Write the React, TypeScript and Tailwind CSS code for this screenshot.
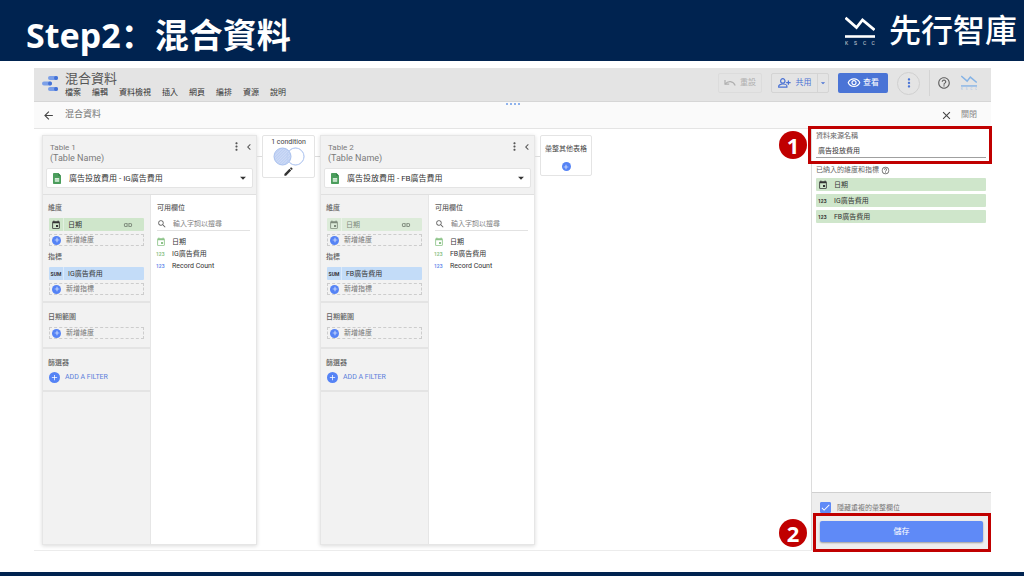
import { useState } from 'react'
import type { ReactNode } from 'react'
import {
  MdAdd,
  MdArrowBack,
  MdArrowDropDown,
  MdCheck,
  MdChevronLeft,
  MdClose,
  MdEdit,
  MdEvent,
  MdHelpOutline,
  MdLink,
  MdMoreVert,
  MdOutlineVisibility,
  MdSearch
} from 'react-icons/md'

interface BlendTable {
  id: number
  source: string
  metric: string
  dimmed?: boolean
}

const MENU = ['檔案', '編輯', '資料檢視', '插入', '網頁', '編排', '資源', '說明']

const TABLES: BlendTable[] = [
  { id: 1, source: '廣告投放費用 - IG廣告費用', metric: 'IG廣告費用' },
  { id: 2, source: '廣告投放費用 - FB廣告費用', metric: 'FB廣告費用', dimmed: true }
]

function WaveMark({ className }: { className: string }) {
  return (
    <svg viewBox="0 0 30 30" className={className} fill="none" stroke="currentColor" aria-hidden="true">
      <path d="M0.500 1.800 L11.500 11.500 L17.500 4 L29.500 14" strokeWidth="2.8" />
      <path d="M0 20.500 H30" strokeWidth="2.6" />
      <g fill="currentColor" stroke="none" fontSize="5" opacity="0.8">
        <text x="0" y="29">K</text>
        <text x="9" y="29">S</text>
        <text x="18" y="29">C</text>
        <text x="26.500" y="29">C</text>
      </g>
    </svg>
  )
}

function StudioLogo() {
  return (
    <svg viewBox="0 0 16 15" className="h-[15px] w-4" aria-hidden="true">
      <rect x="6" y="0" width="10" height="4" rx="2" fill="#7b9fe8" />
      <circle cx="14" cy="2" r="2" fill="#4472d6" />
      <rect x="0" y="5.500" width="10" height="4" rx="2" fill="#7b9fe8" />
      <circle cx="8" cy="7.500" r="2" fill="#4472d6" />
      <rect x="6" y="11" width="10" height="4" rx="2" fill="#7b9fe8" />
      <circle cx="14" cy="13" r="2" fill="#4472d6" />
    </svg>
  )
}

function UndoIcon() {
  return (
    <svg viewBox="0 0 12 8" className="h-2 w-3" fill="none" stroke="currentColor" strokeWidth="1.2" aria-hidden="true">
      <path d="M1 1 V5.200 H5.200" />
      <path d="M1.200 5 C4 1.600 9 1.600 11.200 6.500" />
    </svg>
  )
}

function ShareIcon() {
  return (
    <svg viewBox="0 0 13 10" className="h-[10px] w-[13px]" fill="none" stroke="currentColor" strokeWidth="1.2" aria-hidden="true">
      <circle cx="4.800" cy="2.900" r="2.200" />
      <path d="M0.700 9.200 V8 C0.700 6.900 3 6 4.800 6 C6.600 6 8.900 6.900 8.900 8 V9.200 Z" />
      <path d="M10.400 2.400 V6.800 M8.200 4.600 H12.600" />
    </svg>
  )
}

function SheetIcon() {
  return (
    <svg viewBox="0 0 8 11" className="h-[11px] w-2" aria-hidden="true">
      <path d="M0.800 0 H5.300 L8 2.700 V10.200 Q8 11 7.200 11 H0.800 Q0 11 0 10.200 V0.800 Q0 0 0.800 0Z" fill="#4b9d5c" />
      <path d="M5.300 0 V2.700 H8Z" fill="#2f7d43" />
      <rect x="1.800" y="5" width="4.400" height="3.800" fill="#d3ead6" />
      <path d="M1.800 6.900 H6.200" stroke="#8cc597" strokeWidth="0.500" />
    </svg>
  )
}

function JoinIcon() {
  return (
    <svg viewBox="0 0 32 19" className="h-[19px] w-8" aria-hidden="true">
      <defs>
        <pattern id="hatch" width="2" height="2" patternUnits="userSpaceOnUse" patternTransform="rotate(45)">
          <rect width="2" height="2" fill="#cfdcf7" />
          <path d="M0 0 V2" stroke="#a9c1ee" strokeWidth="1" />
        </pattern>
      </defs>
      <circle cx="22.500" cy="9.500" r="8.500" fill="#fff" stroke="#bed0f3" />
      <circle cx="9.500" cy="9.500" r="8.500" fill="url(#hatch)" stroke="#a9c1ee" />
      <circle cx="22.500" cy="9.500" r="8.500" fill="none" stroke="#bed0f3" />
    </svg>
  )
}

function Plus({ big }: { big?: boolean }) {
  return (
    <span
      className={
        big
          ? 'flex size-[11px] shrink-0 items-center justify-center rounded-full bg-[#5583f5] text-[9px] text-white'
          : 'flex size-[9px] shrink-0 items-center justify-center rounded-full bg-[#5583f5] text-[8px] text-white'
      }
    >
      <MdAdd />
    </span>
  )
}

function AddField({ children }: { children: ReactNode }) {
  return (
    <button className="flex h-3 w-full items-center gap-[5px] border border-dashed border-[#cdcdcd] px-0.5 text-[#757575]">
      <Plus />
      {children}
    </button>
  )
}

function DateChip({ dimmed }: { dimmed?: boolean }) {
  return (
    <div
      className={
        dimmed
          ? 'flex h-[13px] items-center rounded-[1px] bg-[#dcebd9] text-[#7d8a7b]'
          : 'flex h-[13px] items-center rounded-[1px] bg-[#cfe6cb] text-[#333]'
      }
    >
      <span className="flex h-full w-[15px] items-center justify-center border-r border-white/40 text-[10px]">
        <MdEvent />
      </span>
      <span className="flex-1 pl-1">日期</span>
      <MdLink className="mr-[11px] text-[10px] text-[#6f7a6d]" />
    </div>
  )
}

function TablePanel({ table }: { table: BlendTable }) {
  return (
    <section className="flex w-[215px] shrink-0 flex-col border border-[#e6e6e6] bg-[#f2f2f2] shadow-[0_1px_4px_rgba(0,0,0,0.15)]">
      <header className="h-[59px] border-b border-[#e0e0e0] px-[3px] pt-1">
        <div className="flex h-7 items-start justify-between pl-1 text-[#7a7a7a]">
          <div className="pt-[3px]">
            <h2 className="text-[8px] leading-[10px]">Table {table.id}</h2>
            <p className="text-[9px] leading-[11px]">(Table Name)</p>
          </div>
          <div className="-mr-0.5 flex text-[#555]">
            <button aria-label="更多選項"><MdMoreVert className="text-[13px]" /></button>
            <button aria-label="收合"><MdChevronLeft className="text-[12px]" /></button>
          </div>
        </div>
        <div className="relative flex h-5 items-center rounded-[2px] border border-[#e4e4e4] bg-white pl-[6px]">
          <SheetIcon />
          <select
            aria-label="資料來源"
            className="h-full flex-1 appearance-none bg-transparent pt-px pl-2 text-[8px] text-[#333] outline-none"
          >
            <option>{table.source}</option>
          </select>
          <MdArrowDropDown className="pointer-events-none absolute right-0.5 text-[14px] text-[#333]" />
        </div>
      </header>
      <div className="flex flex-1 text-[7px] leading-[10px]">
        <div className="w-[108px] border-r border-[#e6e6e6] text-[#616161]">
          <div className="border-b-2 border-[#e4e4e4] px-[5px] pt-2 pb-[6px]">
            <h3 className="font-medium">維度</h3>
            <div className="mt-[5px] flex flex-col gap-[3px] px-px">
              <DateChip dimmed={table.dimmed} />
              <AddField>新增維度</AddField>
            </div>
            <h3 className="mt-[6px] font-medium">指標</h3>
            <div className="mt-[5px] flex flex-col gap-[3px] px-px">
              <div className="flex h-[13px] items-center rounded-[1px] bg-[#c3dcf8] text-[#333]">
                <span className="flex h-full w-[15px] items-center justify-center border-r border-white/40 text-[5px] font-bold">
                  SUM
                </span>
                <span className="pl-1">{table.metric}</span>
              </div>
              <AddField>新增指標</AddField>
            </div>
          </div>
          <div className="border-b-2 border-[#e4e4e4] px-[5px] pt-[9px] pb-2">
            <h3 className="font-medium">日期範圍</h3>
            <div className="mt-[5px] px-px">
              <AddField>新增維度</AddField>
            </div>
          </div>
          <div className="border-b-2 border-[#e4e4e4] px-[5px] pt-[9px] pb-[7px]">
            <h3 className="font-medium">篩選器</h3>
            <button className="mt-[3px] ml-px flex h-3 items-center gap-[5px] text-[#5c7fdb]">
              <Plus big />
              ADD A FILTER
            </button>
          </div>
        </div>
        <div className="flex-1 bg-white px-[6px] pt-2 text-[#333]">
          <h3 className="font-medium text-[#616161]">可用欄位</h3>
          <label className="mt-[5px] flex h-[13px] items-center gap-[6px] border-b border-[#e2e2e2]">
            <MdSearch className="shrink-0 text-[10px] text-[#616161]" />
            <input
              aria-label="搜尋欄位"
              placeholder="輸入字詞以搜尋"
              className="w-full min-w-0 outline-none placeholder:text-[#858585]"
            />
          </label>
          <ul className="mt-1">
            <li className="flex h-[13px] items-center">
              <MdEvent className="-ml-px mr-[6px] text-[10px] text-[#8dc389]" />
              日期
            </li>
            <li className="flex h-3 items-center">
              <span className="-ml-px w-4 text-[5px] font-bold text-[#8dc389]">123</span>
              {table.metric}
            </li>
            <li className="flex h-3 items-center">
              <span className="-ml-px w-4 text-[5px] font-bold text-[#6e8fec]">123</span>
              Record Count
            </li>
          </ul>
        </div>
      </div>
    </section>
  )
}

function Connector() {
  return <span className="mt-[21px] h-px w-[5px] shrink-0 bg-[#dcdcdc]" />
}

function Badge({ children }: { children: ReactNode }) {
  return (
    <span className="flex size-7 items-center justify-center rounded-full bg-[#c00000] font-['Noto_Sans','Open_Sans',sans-serif] text-[22px] leading-none font-bold text-white">
      {children}
    </span>
  )
}

export default function App() {
  const [name, setName] = useState('廣告投放費用')
  const [hideJoined, setHideJoined] = useState(true)

  return (
    <div className="flex min-h-screen flex-col bg-white font-[Roboto,'Noto_Sans_CJK_TC',sans-serif]">
      <header className="flex h-[61px] items-center justify-between bg-[#002350] pr-[7px] pl-[26px] text-white">
        <h1 lang="zh-Hans" className="pt-2 font-['Noto_Sans','Noto_Sans_CJK_SC',sans-serif] text-[34px] leading-none font-bold">
          Step2：混合資料
        </h1>
        <div className="flex items-center gap-[14px]">
          <WaveMark className="size-[30px]" />
          <span className="text-[32px] leading-none font-medium">先行智庫</span>
        </div>
      </header>

      <main className="mt-[7px] mr-[33px] mb-[21px] ml-[34px] flex flex-1 flex-col border-b border-[#ececec]">
        <div className="flex h-[34px] items-center border-b border-[#d6d6d6] bg-[#e4e4e4] pb-[3px] pl-2">
          <StudioLogo />
          <div className="ml-[7px] flex-1 pt-1">
            <h2 className="text-[13px] leading-[16px] text-[#555]">混合資料</h2>
            <nav className="flex gap-[11px] text-[8px] leading-[12px] text-[#333]">
              {MENU.map((item) => (
                <button key={item}>{item}</button>
              ))}
            </nav>
          </div>
          <div className="flex items-center text-[8px]">
            <button className="flex h-5 w-11 items-center justify-center gap-1 rounded-[2px] border border-[#dcdcdc] text-[#b0b0b0]">
              <UndoIcon />
              重設
            </button>
            <div className="ml-[9px] flex h-5 rounded-[2px] border border-[#d4d4d4] text-[#4a72d4]">
              <button className="flex w-[46px] items-center justify-center gap-[5px] border-r border-[#d4d4d4]">
                <ShareIcon />
                共用
              </button>
              <button aria-label="共用選項" className="flex w-[10px] items-center justify-center">
                <MdArrowDropDown className="text-[10px]" />
              </button>
            </div>
            <button className="ml-[9px] flex h-5 w-[50px] items-center justify-center gap-0.5 rounded-[2px] bg-[#4a74d6] text-white">
              <MdOutlineVisibility className="text-[14px]" />
              查看
            </button>
            <button
              aria-label="更多"
              className="ml-[9px] flex size-[23px] items-center justify-center rounded-full border border-[#d0d0d0] text-[#4a74d6]"
            >
              <MdMoreVert className="text-[14px]" />
            </button>
            <span className="ml-[9px] h-[26px] w-px bg-[#d4d4d4]" />
            <button aria-label="說明" className="ml-[7px] text-[#616161]">
              <MdHelpOutline className="text-[14px]" />
            </button>
            <WaveMark className="mr-[14px] ml-[10px] size-4 text-[#85b3e6]" />
          </div>
        </div>

        <div className="grid h-[27px] grid-cols-3 items-center border-b border-[#e4e4e4] bg-[#fafafa]">
          <div className="flex items-center gap-[10px] pl-2 text-[9px] text-[#777]">
            <button aria-label="返回">
              <MdArrowBack className="text-[13px] text-[#444]" />
            </button>
            混合資料
          </div>
          <div className="flex justify-center gap-0.5 self-start pt-px">
            {[0, 1, 2, 3].map((dot) => (
              <span key={dot} className="size-0.5 rounded-full bg-[#6b9be8]" />
            ))}
          </div>
          <button className="mr-[14px] flex items-center gap-2 justify-self-end text-[8px] text-[#888]">
            <MdClose className="text-[13px] text-[#444]" />
            關閉
          </button>
        </div>

        <div className="flex flex-1">
          <div className="flex min-w-0 flex-1 items-start px-2 pt-[6px] pb-[5px]">
            <div className="flex self-stretch">
              <TablePanel table={TABLES[0]} />
              <Connector />
            </div>
            <div className="flex h-[43px] w-[53px] shrink-0 flex-col items-center rounded-[2px] border border-[#e4e4e4] bg-white pt-0.5 text-[7px] leading-[9px] text-[#424242]">
              1 condition
              <JoinIcon />
              <button aria-label="編輯條件">
                <MdEdit className="text-[11px] text-[#333]" />
              </button>
            </div>
            <Connector />
            <div className="flex self-stretch">
              <TablePanel table={TABLES[1]} />
              <Connector />
            </div>
            <button className="flex h-[41px] w-[52px] shrink-0 flex-col items-center justify-center gap-2 rounded-[2px] border border-[#e4e4e4] bg-white pt-1 text-[7px] leading-[10px] text-[#424242]">
              彙整其他表格
              <Plus />
            </button>
          </div>

          <aside className="relative flex w-[180px] shrink-0 flex-col border-l border-[#dcdcdc] text-[7px] leading-[10px] text-[#333]">
            <div className="flex flex-1 flex-col pt-0.5 pr-[5px] pl-1">
              <label htmlFor="source-name" className="text-[#616161]">資料來源名稱</label>
              <input
                id="source-name"
                value={name}
                onChange={(e) => setName(e.target.value)}
                className="mt-px h-4 border-b border-[#a0a0a0] px-0.5 outline-none"
              />
              <h3 className="mt-[7px] flex items-center gap-0.5 text-[#616161]">
                已納入的維度和指標
                <MdHelpOutline className="text-[9px]" />
              </h3>
              <ul className="mt-[3px] flex flex-col gap-[3px]">
                <li className="flex h-[13px] items-center rounded-[1px] bg-[#cfe6cb] pl-0.5">
                  <MdEvent className="mr-[6px] text-[10px]" />
                  日期
                </li>
                {TABLES.map((t) => (
                  <li key={t.id} className="flex h-[13px] items-center rounded-[1px] bg-[#cfe6cb] pl-0.5">
                    <span className="w-4 text-[5px] font-bold">123</span>
                    {t.metric}
                  </li>
                ))}
              </ul>
            </div>
            <div className="border-t border-[#d0d0d0] bg-[#eeeeee] px-2 pt-[9px] pb-2">
              <label className="flex items-center gap-[6px] text-[#757575]">
                <span className="relative flex size-[11px]">
                  <input
                    type="checkbox"
                    checked={hideJoined}
                    onChange={(e) => setHideJoined(e.target.checked)}
                    className="size-[11px] appearance-none rounded-[1px] border border-[#5f8af7] checked:bg-[#5f8af7]"
                  />
                  {hideJoined && <MdCheck className="pointer-events-none absolute inset-0 size-[11px] text-white" />}
                </span>
                隱藏重複的彙整欄位
              </label>
              <button className="mt-2 h-[21px] w-full rounded-[2px] bg-[#5f8af7] text-[8px] text-white shadow-[0_1px_2px_rgba(0,0,0,0.35)]">
                儲存
              </button>
            </div>

            {/* numbered callouts over the panel */}
            <div className="pointer-events-none absolute -top-[3px] -right-px -left-1 h-[38px] border-3 border-[#c00000]" />
            <div className="absolute top-[2px] right-full mr-[5px]"><Badge>1</Badge></div>
            <div className="pointer-events-none absolute right-0 -bottom-0.5 left-px h-[39px] border-3 border-[#c00000]" />
            <div className="absolute right-full bottom-[3px] mr-[5px]"><Badge>2</Badge></div>
          </aside>
        </div>
      </main>

      <footer className="h-1 bg-[#002350]" />
    </div>
  )
}
